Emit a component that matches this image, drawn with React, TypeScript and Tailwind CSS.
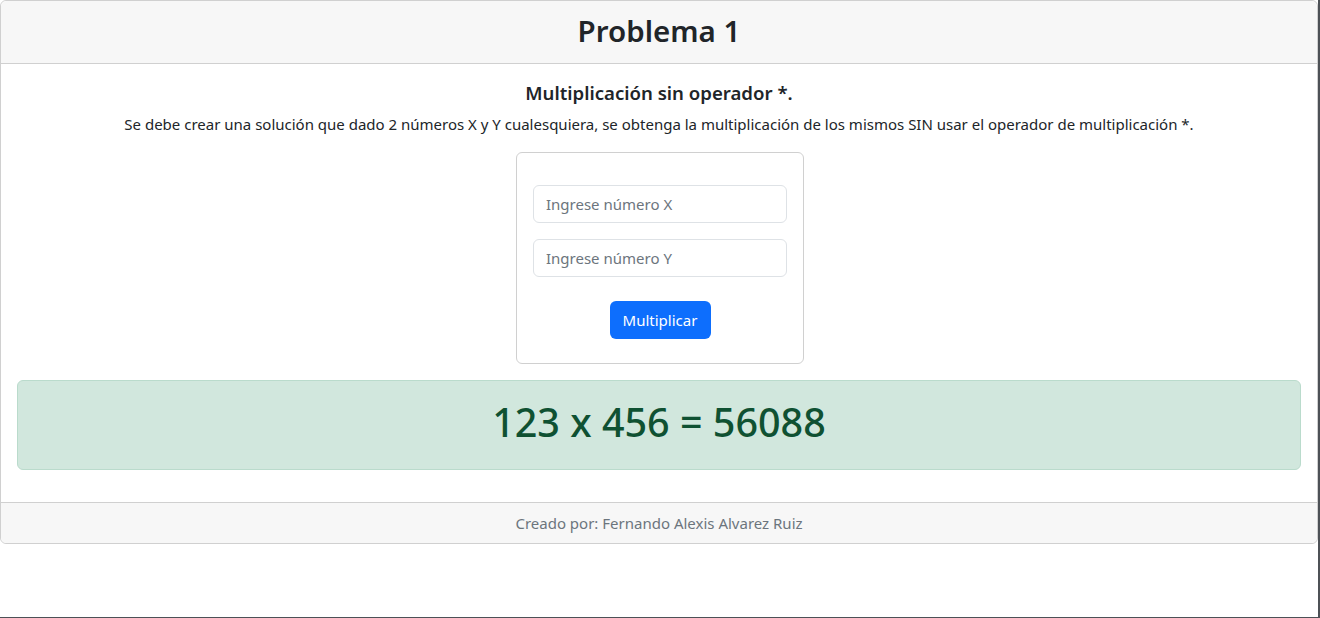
import React from 'react'

export default function App() {
  return (
    <div
      className="h-[618px] w-[1320px] border-r-2 border-b border-[#4d5156] bg-white"
      style={{ fontFamily: '"Noto Sans", "Open Sans", sans-serif' }}
    >
      <div className="rounded-md border border-[#d0d0d0] text-[#212529]">
        {/* Header */}
        <div className="h-[63px] rounded-t-md border-b border-[#d0d0d0] bg-[#f7f7f7] pt-[11px] text-center">
          <h2 className="text-[29.5px] font-semibold leading-[38px]">Problema 1</h2>
        </div>

        {/* Body */}
        <div className="p-4 text-center">
          <h5 className="mb-2 text-[18.6px] font-semibold leading-[25px]">Multiplicación sin operador *.</h5>
          <p className="mb-4 text-[15px] leading-[23px]">
            Se debe crear una solución que dado 2 números X y Y cualesquiera, se obtenga la multiplicación de los mismos SIN usar el operador de multiplicación *.
          </p>

          <div className="mx-auto w-[288px] translate-x-px rounded-md border border-[#d0d0d0] px-4 pt-8 pb-6">
            <input
              type="text"
              placeholder="Ingrese número X"
              className="block h-[38px] w-full rounded-md border border-[#dee2e6] px-3 text-[15px] placeholder:text-[#6c757d]"
            />
            <input
              type="text"
              placeholder="Ingrese número Y"
              className="mt-4 block h-[38px] w-full rounded-md border border-[#dee2e6] px-3 text-[15px] placeholder:text-[#6c757d]"
            />
            <button className="mt-6 h-[38px] w-[101px] rounded-md bg-[#0d6efd] text-[15px] text-white">
              Multiplicar
            </button>
          </div>

          <div className="mt-4 mb-4 flex h-[90px] items-center justify-center rounded-md border border-[#badbcc] bg-[#d1e7dd] pb-1">
            <h1 className="text-[39.5px] font-medium text-[#0f5132]">123 x 456 = 56088</h1>
          </div>
        </div>

        {/* Footer */}
        <div className="h-[41px] rounded-b-md border-t border-[#d0d0d0] bg-[#f7f7f7] py-2 text-center text-[15px] leading-6 text-[#6c757d]">
          Creado por: Fernando Alexis Alvarez Ruiz
        </div>
      </div>
    </div>
  )
}
